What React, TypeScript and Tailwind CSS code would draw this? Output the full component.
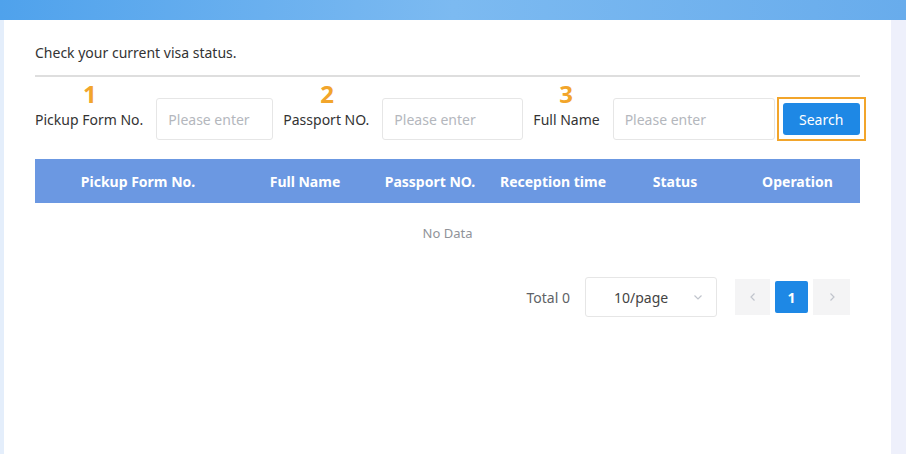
import React from 'react';

const columns = ['Pickup Form No.', 'Full Name', 'Passport NO.', 'Reception time', 'Status', 'Operation'];

const Field: React.FC<{ label: string; num: string; width: string; numLeft: string }> = ({ label, num, width, numLeft }) => (
  <div className="flex shrink-0 items-center">
    <label className="relative text-[14px] text-[#333] whitespace-nowrap">
      <span className={`absolute ${numLeft} -top-[27px] text-[24px] font-bold leading-none text-[#f2a52b]`}>{num}</span>
      {label}
    </label>
    <input
      className={`ml-[13px] ${width} h-[42px] rounded-[3px] border border-[#e6e6e6] bg-white px-[11px] text-[14px] outline-none placeholder:text-[#b4b7bd]`}
      placeholder="Please enter"
    />
  </div>
);

const App: React.FC = () => {
  return (
    <div className="h-[454px] w-[906px] overflow-hidden bg-[#eef1fb] font-['Noto_Sans',sans-serif]">
      <div className="h-[20px] bg-gradient-to-r from-[#4fa2ec] via-[#7cbaf1] to-[#68acec]" />
      <div className="flex h-[434px]">
        <div className="w-[4px] shrink-0 bg-[#e4eefb]" />
        <div className="min-w-0 flex-1 bg-white pl-[31px] pr-[31px] pt-[23px]">
          <h1 className="text-[14px] leading-[20px] text-[#333]">Check your current visa status.</h1>
          <div className="mt-[12px] h-[2px] bg-[#dedede]" />

          <div className="mt-[20px] flex items-center">
            <Field label="Pickup Form No." num="1" width="w-[117px]" numLeft="left-[48px]" />
            <div className="ml-[10px]">
              <Field label="Passport NO." num="2" width="w-[141px]" numLeft="left-[37px]" />
            </div>
            <div className="ml-[10px]">
              <Field label="Full Name" num="3" width="w-[162px]" numLeft="left-[26px]" />
            </div>
            <div className="ml-[2px] shrink-0 border-2 border-[#f2a52b] p-[4px]">
              <button className="h-[32px] w-[77px] rounded-[3px] bg-[#1e88e5] text-[14px] text-white">Search</button>
            </div>
          </div>

          <div className="mt-[18px] grid h-[44px] grid-cols-[206px_128px_122px_124px_120px_1fr] items-center bg-[#6b98e2] text-[14px] font-bold text-white">
            {columns.map((c) => (
              <div key={c} className="text-center whitespace-nowrap">{c}</div>
            ))}
          </div>
          <div className="flex h-[62px] items-center justify-center text-[13px] text-[#909399]">No Data</div>

          <div className="mt-[12px] flex items-center justify-end pr-[10px] text-[14px] text-[#606266]">
            <span>Total 0</span>
            <div className="ml-[15px] flex h-[40px] w-[132px] items-center justify-between rounded-[3px] border border-[#e6e6e6] pl-[28px] pr-[12px]">
              <span className="text-[#444]">10/page</span>
              <svg width="12" height="12" viewBox="0 0 12 12" fill="none" stroke="#c0c4cc" strokeWidth="1.2">
                <path d="M2.5 4.5 6 8l3.5-3.5" />
              </svg>
            </div>
            <div className="ml-[18px] flex items-center gap-[5px]">
              <div className="flex h-[36px] w-[35px] items-center justify-center bg-[#f4f4f5]">
                <svg width="10" height="12" viewBox="0 0 10 12" fill="none" stroke="#c0c4cc" strokeWidth="1.2">
                  <path d="M6.5 2.5 3 6l3.5 3.5" />
                </svg>
              </div>
              <div className="flex h-[32px] w-[33px] items-center justify-center rounded-[2px] bg-[#1e88e5] text-[14px] font-bold text-white">1</div>
              <div className="flex h-[36px] w-[37px] items-center justify-center bg-[#f4f4f5]">
                <svg width="10" height="12" viewBox="0 0 10 12" fill="none" stroke="#c0c4cc" strokeWidth="1.2">
                  <path d="M3.5 2.5 7 6 3.5 9.5" />
                </svg>
              </div>
            </div>
          </div>
        </div>
        <div className="w-[15px] shrink-0 bg-[#eef0fb]" />
      </div>
    </div>
  );
};

export default App;
